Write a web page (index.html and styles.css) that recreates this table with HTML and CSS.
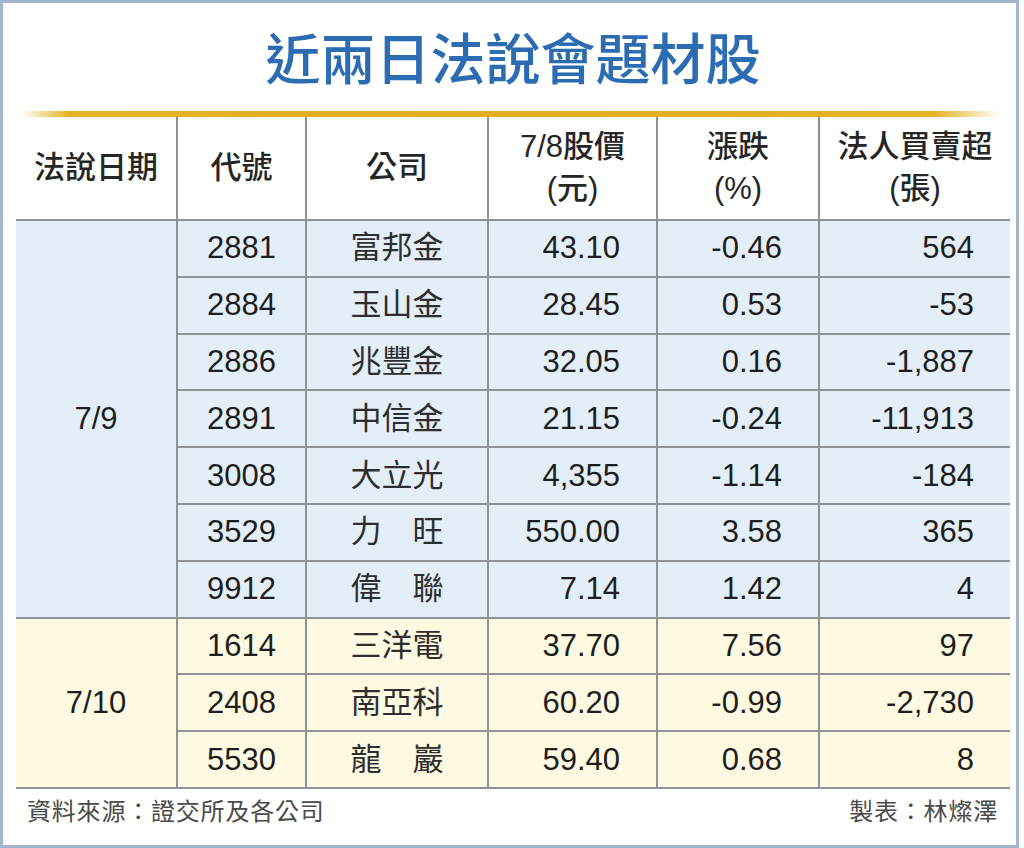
FILE: index.html
```html
<!DOCTYPE html>
<html lang="zh-Hant">
<head>
<meta charset="utf-8">
<title>近兩日法說會題材股</title>
<link rel="stylesheet" href="styles.css">
</head>
<body>
<div class="frame">
  <h1 class="title">近兩日法說會題材股</h1>
  <div class="rule"></div>
  <table class="grid">
    <colgroup>
      <col class="c-date"><col class="c-code"><col class="c-name"><col class="c-price"><col class="c-chg"><col class="c-net">
    </colgroup>
    <thead>
      <tr>
        <th>法說日期</th>
        <th>代號</th>
        <th>公司</th>
        <th>7/8股價<br>(元)</th>
        <th>漲跌<br>(%)</th>
        <th>法人買賣超<br>(張)</th>
      </tr>
    </thead>
    <tbody class="blue">
      <tr><td class="date" rowspan="7">7/9</td><td class="code">2881</td><td class="name">富邦金</td><td class="num">43.10</td><td class="num">-0.46</td><td class="num">564</td></tr>
      <tr><td class="code">2884</td><td class="name">玉山金</td><td class="num">28.45</td><td class="num">0.53</td><td class="num">-53</td></tr>
      <tr><td class="code">2886</td><td class="name">兆豐金</td><td class="num">32.05</td><td class="num">0.16</td><td class="num">-1,887</td></tr>
      <tr><td class="code">2891</td><td class="name">中信金</td><td class="num">21.15</td><td class="num">-0.24</td><td class="num">-11,913</td></tr>
      <tr><td class="code">3008</td><td class="name">大立光</td><td class="num">4,355</td><td class="num">-1.14</td><td class="num">-184</td></tr>
      <tr><td class="code">3529</td><td class="name">力　旺</td><td class="num">550.00</td><td class="num">3.58</td><td class="num">365</td></tr>
      <tr><td class="code">9912</td><td class="name">偉　聯</td><td class="num">7.14</td><td class="num">1.42</td><td class="num">4</td></tr>
    </tbody>
    <tbody class="yellow">
      <tr><td class="date" rowspan="3">7/10</td><td class="code">1614</td><td class="name">三洋電</td><td class="num">37.70</td><td class="num">7.56</td><td class="num">97</td></tr>
      <tr><td class="code">2408</td><td class="name">南亞科</td><td class="num">60.20</td><td class="num">-0.99</td><td class="num">-2,730</td></tr>
      <tr><td class="code">5530</td><td class="name">龍　巖</td><td class="num">59.40</td><td class="num">0.68</td><td class="num">8</td></tr>
    </tbody>
  </table>
  <div class="foot">
    <span>資料來源：證交所及各公司</span>
    <span>製表：林燦澤</span>
  </div>
</div>
</body>
</html>
```

FILE: styles.css
```css
html, body {
  margin: 0;
  padding: 0;
  background: #ffffff;
}

body {
  font-family: "Liberation Sans", "Noto Sans CJK TC", sans-serif;
  color: #1e1e1e;
}

.frame {
  box-sizing: border-box;
  width: 1019px;
  height: 848px;
  border: 3px solid #a3b5c8;
  padding: 0 6px 0 13px;
  background: #ffffff;
}

.title {
  margin: 0;
  height: 104px;
  padding-bottom: 4px;
  line-height: 104px;
  text-align: center;
  font-family: "Noto Sans CJK TC", sans-serif;
  font-size: 55px;
  font-weight: 500;
  color: #2b6cb3;
}

.rule {
  height: 6px;
  margin: 0 8px 0 4px;
  background: linear-gradient(to right,
    rgba(231, 180, 36, 0) 0,
    #e6b324 5%,
    #e3ae1f 50%,
    #e6b324 93%,
    rgba(231, 180, 36, 0) 100%);
}

.grid {
  width: 994px;
  table-layout: fixed;
  border-collapse: collapse;
  border-spacing: 0;
}

.c-date { width: 161px; }
.c-code { width: 129px; }
.c-name { width: 182px; }
.c-price { width: 169px; }
.c-chg { width: 162px; }
.c-net { width: 191px; }

.grid th {
  height: 102px;
  padding: 0;
  font-family: "Liberation Sans", "Noto Sans CJK TC", sans-serif;
  font-size: 31px;
  font-weight: 500;
  line-height: 42px;
  color: #262626;
  text-align: center;
  vertical-align: middle;
  background: #ffffff;
  border-left: 2px solid #8e9398;
  border-bottom: 2px solid #8e9398;
}

.grid th:first-child {
  border-left: none;
}

.grid td {
  height: 54.8px;
  padding: 0;
  font-size: 31px;
  line-height: 34px;
  vertical-align: middle;
  border-left: 2px solid #8e9398;
  border-bottom: 2px solid #8e9398;
}

.grid td.date {
  border-left: none;
  text-align: center;
}

.blue td { background: #e4eef8; }
.yellow td { background: #fdfae1; }

.code { text-align: center; }

.name {
  text-align: center;
  font-size: 32px;
  color: #2e2e2e;
}

.num {
  text-align: right;
  padding-right: 36px !important;
}

.foot {
  display: flex;
  justify-content: space-between;
  padding: 8px 12px 0 11px;
  font-family: "Noto Sans CJK TC", sans-serif;
  font-size: 24px;
  line-height: 26px;
  color: #4a4a4a;
  letter-spacing: 0.8px;
}
```
